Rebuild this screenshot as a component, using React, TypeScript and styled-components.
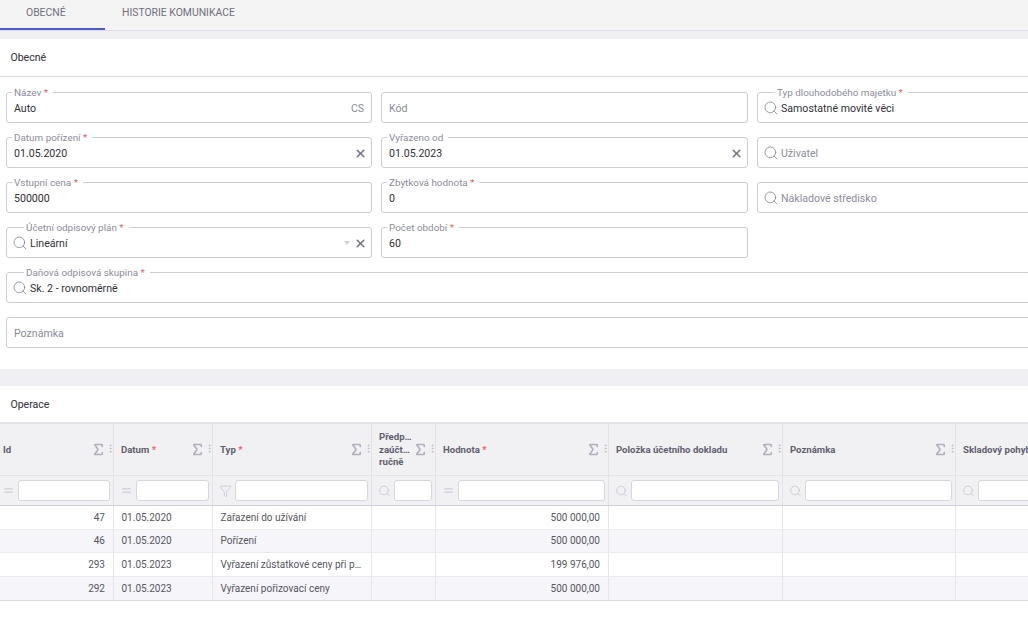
import React from "react";
import styled, { createGlobalStyle } from "styled-components";
import { Search, X, Sigma, EllipsisVertical, Equal, Funnel } from "lucide-react";

const Global = createGlobalStyle`
  html, body { margin: 0; padding: 0; background: #fff; }
  body { font-family: Roboto, "Liberation Sans", sans-serif; overflow: hidden; }
`;

const Page = styled.div`
  width: 1028px;
  height: 619px;
  overflow: hidden;
  background: #fff;
`;

const TabBar = styled.div`
  display: flex;
  height: 31px;
  box-sizing: border-box;
  background: #f4f4f5;
  border-bottom: 1px solid #dcdce2;
`;

const Tab = styled.div<{ $active?: boolean; $w: number; $pad: number }>`
  width: ${(p) => p.$w}px;
  height: 30px;
  box-sizing: border-box;
  padding: 6px 0 0 ${(p) => p.$pad}px;
  font-size: 10.4px;
  line-height: 13px;
  color: #6f7079;
  border-bottom: 2px solid ${(p) => (p.$active ? "#4a5cd0" : "transparent")};
`;

const Band = styled.div<{ $h: number }>`
  height: ${(p) => p.$h}px;
  background: #f0f0f4;
`;

const Panel = styled.section<{ $h?: number }>`
  background: #fff;
  height: ${(p) => (p.$h ? `${p.$h}px` : "auto")};
`;

const PanelTitle = styled.h2<{ $h: number; $line?: boolean }>`
  margin: 0;
  box-sizing: border-box;
  height: ${(p) => p.$h}px;
  padding-left: 10.5px;
  display: flex;
  align-items: center;
  font-size: 10.5px;
  font-weight: 400;
  color: #3a3b44;
  -webkit-text-stroke: 0.1px #3a3b44;
  border-bottom: ${(p) => (p.$line ? "1px solid #d8d8de" : "none")};
`;

const FormGrid = styled.div`
  display: grid;
  grid-template-columns: 366px 367px 367px;
  column-gap: 9px;
  row-gap: 14px;
  padding: 15px 0 0 6px;
  width: 1200px;
`;

const Field = styled.div<{ $span?: number }>`
  grid-column: span ${(p) => p.$span || 1};
  padding: 1px 7px 0;
  height: 31px;
  min-width: 0;
  box-sizing: border-box;
  border: 1px solid #cdcdd8;
  border-radius: 3px;
  display: flex;
  align-items: center;
  position: relative;
`;

const FloatLabel = styled.label<{ $icon?: boolean }>`
  position: absolute;
  top: -6px;
  left: ${(p) => (p.$icon ? 17 : 5)}px;
  padding: 0 5px 0 2px;
  background: #fff;
  font-size: 9.9px;
  line-height: 11px;
  color: #8b8c9c;
  white-space: nowrap;
`;

const Star = styled.span`
  color: #ef5a63;
`;

const Value = styled.span<{ $placeholder?: boolean }>`
  flex: 1;
  font-size: 10.6px;
  white-space: nowrap;
  color: ${(p) => (p.$placeholder ? "#8b8c9c" : "#2f3037")};
`;

const Lang = styled.span`
  font-size: 10.5px;
  color: #8b8c9c;
`;

const Caret = styled.span`
  width: 0;
  height: 0;
  margin-right: 3.5px;
  border-left: 3.5px solid transparent;
  border-right: 3.5px solid transparent;
  border-top: 4px solid #cfd0d8;
`;

const SearchIcon = styled(Search)`
  flex: none;
  margin: 0 2px 0 -2px;
  color: #868796;
`;

const ClearIcon = styled(X)`
  flex: none;
  margin-right: -2.5px;
  color: #73748a;
`;

const Table = styled.div`
  width: 1200px;
  font-size: 10px;
  color: #55565f;
`;

const columns = "114px 99px 159px 64px 173px 174px 173px 245px";

const Row = styled.div<{ $h: number; $bg: string; $bottom: string }>`
  display: grid;
  grid-template-columns: ${columns};
  height: ${(p) => p.$h}px;
  background: ${(p) => p.$bg};
  box-sizing: border-box;
  border-bottom: 1px solid ${(p) => p.$bottom};
`;

const HeadRow = styled(Row)`
  border-top: 2px solid #e2e2e7;
`;

const HeadCell = styled.div`
  display: flex;
  align-items: center;
  box-sizing: border-box;
  padding: 1px 0 0 7px;
  border-right: 1px solid #e2e2e7;
  &:first-child { padding-left: 3px; }
`;

const HeadLabel = styled.span`
  flex: 1;
  min-width: 0;
  font-size: 9.6px;
  line-height: 12.5px;
  font-weight: 700;
  color: #5f606d;
  white-space: pre-line;
`;

const SigmaIcon = styled(Sigma)`
  flex: none;
  color: #b0b1bc;
  margin: -2px 0 0 0;
`;

const Kebab = styled(EllipsisVertical)`
  flex: none;
  color: #b8b9c3;
  margin: -3px -3px 0 -1.3px;
`;

const FilterCell = styled.div`
  display: flex;
  align-items: center;
  box-sizing: border-box;
  gap: 3px;
  padding: 0 3px 0 6px;
  border-right: 1px solid #e2e2e7;
  color: #babbc5;
  &:first-child { padding-left: 2px; }
`;

const FilterIconBox = styled.span`
  flex: none;
  width: 13px;
  height: 16px;
  display: flex;
  align-items: center;
  justify-content: center;
`;

const FilterBox = styled.div`
  flex: 1;
  height: 21px;
  min-width: 0;
  box-sizing: border-box;
  background: #fff;
  border: 1px solid #d6d6de;
  border-radius: 3px;
`;

const Cell = styled.div<{ $right?: boolean }>`
  display: flex;
  align-items: center;
  justify-content: ${(p) => (p.$right ? "flex-end" : "flex-start")};
  box-sizing: border-box;
  padding: 0 8px 1px 7.5px;
  border-right: 1px solid #e6e6ea;
  white-space: nowrap;
  font-size: 10px;
  color: #55565f;
`;

type F = { label?: string; req?: boolean; value?: string; placeholder?: string; icon?: boolean; clear?: boolean; caret?: boolean; lang?: boolean; span?: number; skip?: boolean };

const fields: F[] = [
  { label: "Název", req: true, value: "Auto", lang: true },
  { placeholder: "Kód" },
  { label: "Typ dlouhodobého majetku", req: true, value: "Samostatné movité věci", icon: true },
  { label: "Datum pořízení", req: true, value: "01.05.2020", clear: true },
  { label: "Vyřazeno od", value: "01.05.2023", clear: true },
  { placeholder: "Uživatel", icon: true },
  { label: "Vstupní cena", req: true, value: "500000" },
  { label: "Zbytková hodnota", req: true, value: "0" },
  { placeholder: "Nákladové středisko", icon: true },
  { label: "Účetní odpisový plán", req: true, value: "Lineární", icon: true, clear: true, caret: true },
  { label: "Počet období", req: true, value: "60" },
  { skip: true },
  { label: "Daňová odpisová skupina", req: true, value: "Sk. 2 - rovnoměrně", icon: true, span: 3 },
  { placeholder: "Poznámka", span: 3 },
];

const head: { t: string; req?: boolean; f: "eq" | "funnel" | "search" }[] = [
  { t: "Id", f: "eq" },
  { t: "Datum", req: true, f: "eq" },
  { t: "Typ", req: true, f: "funnel" },
  { t: "Předp…\nzaúčt…\nručně", f: "search" },
  { t: "Hodnota", req: true, f: "eq" },
  { t: "Položka účetního dokladu", f: "search" },
  { t: "Poznámka", f: "search" },
  { t: "Skladový pohyb", f: "search" },
];

const rows = [
  ["47", "01.05.2020", "Zařazení do užívání", "500 000,00"],
  ["46", "01.05.2020", "Pořízení", "500 000,00"],
  ["293", "01.05.2023", "Vyřazení zůstatkové ceny při p…", "199 976,00"],
  ["292", "01.05.2023", "Vyřazení pořizovací ceny", "500 000,00"],
];

const rowHeights = [24, 23, 24, 24];

const FilterIcon = ({ kind }: { kind: "eq" | "funnel" | "search" }) => {
  if (kind === "eq") return <Equal size={17} strokeWidth={1.5} />;
  if (kind === "funnel") return <Funnel size={16} strokeWidth={1.1} />;
  return <Search size={16} strokeWidth={1.2} />;
};

export default function App() {
  return (
    <Page>
      <Global />
      <TabBar>
        <Tab $active $w={105} $pad={26}>OBECNÉ</Tab>
        <Tab $w={148} $pad={17}>HISTORIE KOMUNIKACE</Tab>
      </TabBar>
      <Band $h={8} />
      <Panel $h={330}>
        <PanelTitle $h={38} $line>Obecné</PanelTitle>
        <FormGrid>
          {fields.map((f, i) =>
            f.skip ? (
              <div key={i} />
            ) : (
              <Field key={i} $span={f.span}>
                {f.label && (
                  <FloatLabel $icon={f.icon}>
                    {f.label}
                    {f.req && <Star> *</Star>}
                  </FloatLabel>
                )}
                {f.icon && <SearchIcon size={16} strokeWidth={1.25} />}
                <Value $placeholder={!!f.placeholder}>{f.value || f.placeholder}</Value>
                {f.lang && <Lang>CS</Lang>}
                {f.caret && <Caret />}
                {f.clear && <ClearIcon size={13} strokeWidth={3} />}
              </Field>
            )
          )}
        </FormGrid>
      </Panel>
      <Band $h={17} />
      <Panel>
        <PanelTitle $h={36}>Operace</PanelTitle>
        <Table>
          <HeadRow $h={54} $bg="#f1f1f4" $bottom="#e4e4e8">
            {head.map((h) => (
              <HeadCell key={h.t}>
                <HeadLabel>
                  {h.t}
                  {h.req && <Star> *</Star>}
                </HeadLabel>
                <SigmaIcon size={15} strokeWidth={2.6} />
                <Kebab size={11} strokeWidth={2} />
              </HeadCell>
            ))}
          </HeadRow>
          <Row $h={30} $bg="#f1f1f4" $bottom="#cfcfd6">
            {head.map((h) => (
              <FilterCell key={h.t}>
                <FilterIconBox>
                  <FilterIcon kind={h.f} />
                </FilterIconBox>
                <FilterBox />
              </FilterCell>
            ))}
          </Row>
          {rows.map((r, i) => (
            <Row key={r[0]} $h={rowHeights[i]} $bg={i % 2 ? "#f5f5fa" : "#fff"} $bottom={i === 3 ? "#dcdce2" : "#ececf0"}>
              <Cell $right>{r[0]}</Cell>
              <Cell>{r[1]}</Cell>
              <Cell>{r[2]}</Cell>
              <Cell />
              <Cell $right>{r[3]}</Cell>
              <Cell />
              <Cell />
              <Cell />
            </Row>
          ))}
        </Table>
      </Panel>
    </Page>
  );
}
